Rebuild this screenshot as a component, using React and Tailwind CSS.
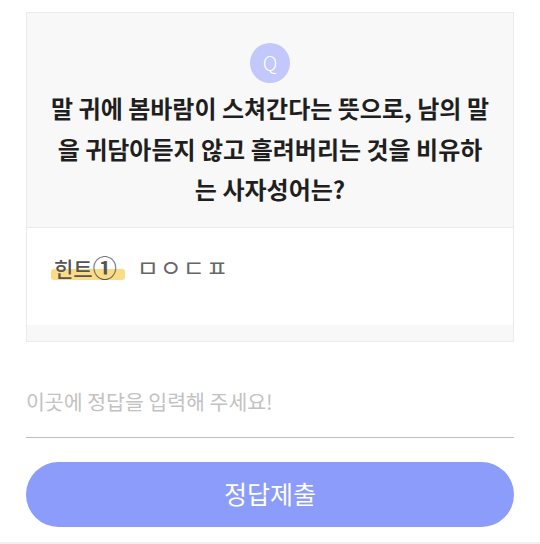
const font = { fontFamily: '"Noto Sans CJK KR", "Noto Sans", sans-serif' };

export default function App() {
  return (
    <div className="w-[540px] h-[544px] bg-white flex flex-col" style={font}>
      <div className="px-[26px] pt-[12px] flex-1">
        {/* question card */}
        <div className="border border-[#ebebeb] flex flex-col">
          <div className="bg-[#f8f8f8] flex flex-col items-center pt-[30px] pb-[17px] px-5 border-b border-[#ebebeb]">
            <div className="w-10 h-10 rounded-full bg-[#c2c8fc] flex items-center justify-center text-white text-[20px] font-light">
              Q
            </div>
            <p className="mt-[5px] text-center text-[24px] leading-[40.5px] font-bold text-[#1f1f1f]">
              말 귀에 봄바람이 스쳐간다는 뜻으로, 남의 말을 귀담아듣지 않고 흘려버리는 것을 비유하는 사자성어는?
            </p>
          </div>
          <div className="bg-white h-[97px] flex items-start pt-[24px] pl-[27px] gap-[20px]">
            <span className="relative text-[21px] leading-[30px] text-[#555] font-medium">
              <span className="absolute left-[-3px] right-[-8px] bottom-[3px] h-[11px] rounded-[3px] bg-[#fbdc86]"></span>
              <span className="relative">
                힌트<span className="text-[24px] leading-[30px] font-bold">①</span>
              </span>
            </span>
            <span className="text-[24px] leading-[30px] text-[#666] tracking-[1px]">ㅁㅇㄷㅍ</span>
          </div>
          <div className="h-[16px] bg-[#f8f8f8]"></div>
        </div>

        {/* answer input */}
        <div className="mt-[36px] border-b border-[#bdbdbd] h-[60px] flex items-center pb-[11px]">
          <input
            type="text"
            placeholder="이곳에 정답을 입력해 주세요!"
            className="w-full outline-none text-[20.5px] text-[#333] placeholder:text-[#c2c2c2] bg-transparent"
            style={font}
          />
        </div>

        <button
          className="mt-[24px] w-full h-[65px] rounded-full bg-[#8c9cfa] text-white text-[25px]"
          style={font}
        >
          정답제출
        </button>
      </div>
      <div className="h-[2px] bg-[#f0f0f0]"></div>
    </div>
  );
}
